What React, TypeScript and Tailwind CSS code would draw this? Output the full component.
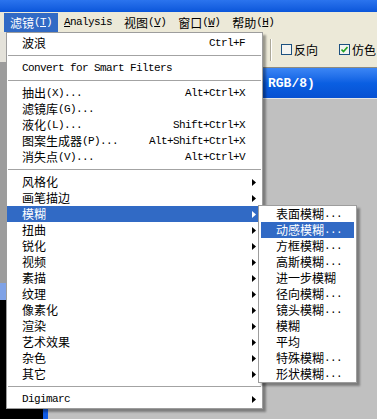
import React from "react";

const CJK = /([\u2E80-\u9FFF\uF900-\uFAFF\uFF00-\uFFEF]+)/;

function Mixed({ text }: { text: string }) {
  const parts = text.split(CJK).filter((p) => p.length > 0);
  return (
    <>
      {parts.map((p, i) =>
        /[\u2E80-\u9FFF\uF900-\uFAFF\uFF00-\uFFEF]/.test(p) ? (
          <span key={i} className="font-['Noto_Sans_CJK_SC',sans-serif] text-[12px] leading-none">
            {p}
          </span>
        ) : (
          <span key={i} className="font-['Liberation_Mono',monospace] text-[11px] tracking-[-0.6px] leading-none whitespace-pre">
            {p}
          </span>
        )
      )}
    </>
  );
}

function Arrow({ white }: { white?: boolean }) {
  return (
    <svg width="4" height="7" viewBox="0 0 4 7" className="block">
      <path d="M0 0 L4 3.5 L0 7 Z" fill={white ? "#ffffff" : "#000000"} />
    </svg>
  );
}

type Item = { t: string; k?: string; a?: boolean; hl?: boolean } | "sep";

const items: Item[] = [
  { t: "波浪", k: "Ctrl+F" },
  "sep",
  { t: "Convert for Smart Filters" },
  "sep",
  { t: "抽出(X)...", k: "Alt+Ctrl+X" },
  { t: "滤镜库(G)..." },
  { t: "液化(L)...", k: "Shift+Ctrl+X" },
  { t: "图案生成器(P)...", k: "Alt+Shift+Ctrl+X" },
  { t: "消失点(V)...", k: "Alt+Ctrl+V" },
  "sep",
  { t: "风格化", a: true },
  { t: "画笔描边", a: true },
  { t: "模糊", a: true, hl: true },
  { t: "扭曲", a: true },
  { t: "锐化", a: true },
  { t: "视频", a: true },
  { t: "素描", a: true },
  { t: "纹理", a: true },
  { t: "像素化", a: true },
  { t: "渲染", a: true },
  { t: "艺术效果", a: true },
  { t: "杂色", a: true },
  { t: "其它", a: true },
  "sep",
  { t: "Digimarc", a: true },
];

const sub = [
  { t: "表面模糊..." },
  { t: "动感模糊...", hl: true },
  { t: "方框模糊..." },
  { t: "高斯模糊..." },
  { t: "进一步模糊" },
  { t: "径向模糊..." },
  { t: "镜头模糊..." },
  { t: "模糊" },
  { t: "平均" },
  { t: "特殊模糊..." },
  { t: "形状模糊..." },
];

function MenuBarItem({ name, letter, active }: { name: string; letter: string; active?: boolean }) {
  return (
    <div
      className={`h-[19px] px-[6px] flex items-center ${active ? "bg-[#316ac5] text-white" : "text-black"}`}
    >
      <span className="font-['Noto_Sans_CJK_SC',sans-serif] text-[12px] leading-none">{name}</span>
      <span className="font-['Liberation_Mono',monospace] text-[11px] tracking-[-0.6px] leading-none">
        (<u>{letter}</u>)
      </span>
    </div>
  );
}

function Checkbox({ checked }: { checked?: boolean }) {
  return (
    <div className="w-[11px] h-[11px] border border-[#1c5180] bg-[#f4f4f0] flex items-center justify-center">
      {checked && (
        <svg width="7" height="7" viewBox="0 0 7 7">
          <path d="M0.5 3.5 L2.5 5.5 L6.5 1" stroke="#21a121" strokeWidth="1.6" fill="none" />
        </svg>
      )}
    </div>
  );
}

export default function App() {
  return (
    <div className="relative w-[377px] h-[419px] overflow-hidden bg-[#c0c0c0] flex flex-col select-none">
      {/* window title bar */}
      <div className="h-[12px] bg-gradient-to-b from-[#2b74ee] to-[#0a56da]" />
      {/* menu bar */}
      <div className="h-[20px] bg-[#ece9d8] flex items-start pl-[4px] pt-[1px]">
        <MenuBarItem name="滤镜" letter="T" active />
        <div className="h-[19px] px-[6px] flex items-center">
          <span className="font-['Liberation_Mono',monospace] text-[11px] tracking-[-0.6px] leading-none">
            <u>A</u>nalysis
          </span>
        </div>
        <MenuBarItem name="视图" letter="V" />
        <MenuBarItem name="窗口" letter="W" />
        <MenuBarItem name="帮助" letter="H" />
      </div>
      {/* options toolbar */}
      <div className="h-[36px] bg-[#ece9d8] border-b border-[#8d8b80] flex items-center pl-[270px]">
        <div className="h-[22px] w-[2px] border-l border-[#aca899] border-r border-r-white" />
        <div className="ml-[9px] flex items-center">
          <Checkbox />
          <span className="ml-[2px] font-['Noto_Sans_CJK_SC',sans-serif] text-[12px] leading-none">反向</span>
        </div>
        <div className="ml-[21px] flex items-center">
          <Checkbox checked />
          <span className="ml-[2px] font-['Noto_Sans_CJK_SC',sans-serif] text-[12px] leading-none">仿色</span>
        </div>
      </div>
      {/* document title bar */}
      <div className="h-[30px] bg-gradient-to-b from-[#3b86f5] via-[#0a5fe2] to-[#0750d2] flex items-center pl-[268px]">
        <span className="font-['Liberation_Mono',monospace] font-bold text-[13px] text-white leading-none">RGB/8)</span>
      </div>
      {/* workspace */}
      <div className="flex-1 bg-[#c0c0c0] border-t border-[#e6e6e6]" />

      {/* other window fragments at the left and bottom */}
      <div className="absolute left-0 top-[32px] w-[7px] h-[30px] bg-[#e4e2da]" />
      <div className="absolute left-0 top-[62px] w-[7px] h-[221px] bg-[#9c9c9c]" />
      <div className="absolute left-0 top-[283px] w-[7px] h-[17px] bg-[#7fa2e6]" />
      <div className="absolute left-0 top-[300px] w-[7px] h-[119px] bg-black" />
      <div className="absolute left-0 top-[408px] w-[43px] h-[11px] bg-black" />
      <div className="absolute left-[43px] top-[408px] w-[5px] h-[11px] bg-[#0f5be6]" />

      {/* main dropdown */}
      <div className="absolute left-[6px] top-[32px] w-[257px] bg-white border border-[#9d9d9d] pt-[2px] pb-[1px] shadow-[3px_3px_2px_rgba(0,0,0,0.35)]">
        {items.map((it, i) =>
          it === "sep" ? (
            <div key={i} className="h-[9px] flex items-center px-[1px]">
              <div className="h-px w-full bg-[#a3a3a3]" />
            </div>
          ) : (
            <div
              key={i}
              className={`h-[16px] flex items-center pl-[15px] pr-[6px] ${it.hl ? "bg-[#316ac5] text-white" : "text-black"}`}
            >
              <div className="flex-1 flex items-center">
                <Mixed text={it.t} />
              </div>
              {it.k && (
                <span className="mr-[11px] font-['Liberation_Mono',monospace] text-[11px] tracking-[-0.6px] leading-none">
                  {it.k}
                </span>
              )}
              {it.a && <Arrow white={it.hl} />}
            </div>
          )
        )}
      </div>

      {/* submenu */}
      <div className="absolute left-[258px] top-[205px] w-[99px] bg-white border border-[#9d9d9d] shadow-[3px_3px_2px_rgba(0,0,0,0.35)]">
        {sub.map((it, i) => (
          <div
            key={i}
            className={`h-[16px] ml-[2px] mr-[2px] flex items-center pl-[15px] ${it.hl ? "bg-[#316ac5] text-white" : "text-black"}`}
          >
            <Mixed text={it.t} />
          </div>
        ))}
      </div>
    </div>
  );
}
